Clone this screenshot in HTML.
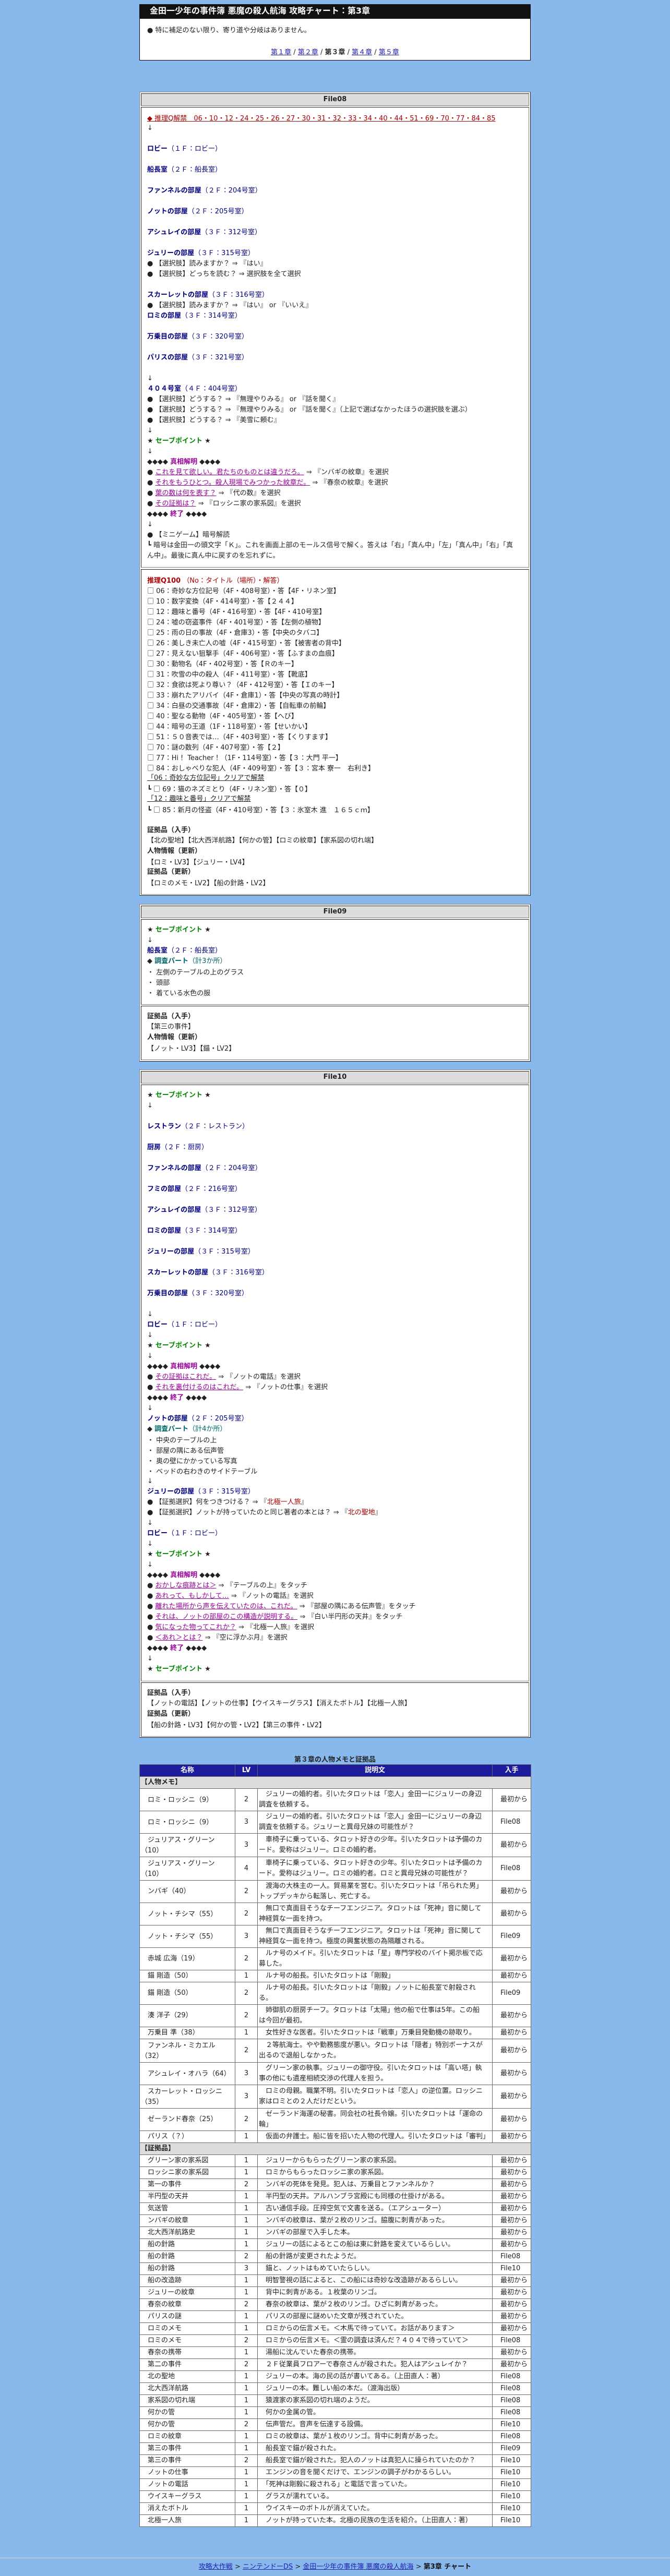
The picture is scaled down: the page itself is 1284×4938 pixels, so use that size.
<!DOCTYPE html>
<html lang="ja"><head><meta charset="utf-8"><title>金田一少年の事件簿 悪魔の殺人航海 攻略チャート：第3章</title>
<style>
html,body{margin:0;padding:0}
body{position:relative;width:1284px;height:4938px;overflow:hidden;background:#88b8ec;font-family:"DejaVu Sans","Noto Sans CJK JP",sans-serif;font-size:13px;line-height:20px;color:#222}
i{font-style:normal;font-family:"Noto Sans CJK JP",sans-serif}
a{color:#2222aa}
.a{position:absolute;box-sizing:border-box}
.o{left:267px;width:750px;background:#fff;border:1px solid;border-color:#808080 #222 #222 #808080;background:#fff}
.h,.b{left:270px;width:744px;border:1px solid;border-color:#222 #808080 #808080 #222;background:#fff}
.h{background:#ddd;text-align:center;font-weight:bold;padding-top:1px;height:24px}
.b{padding:10px 11px 0}
.b div{height:20px;white-space:nowrap}
.r{color:#000080}.r b{color:#000080}
.s{color:#008800;font-weight:bold}
.p{color:#990099;font-weight:bold}
.l{color:#990099;text-decoration:underline}
.e{color:#006666}
.q{color:#aa0000}
table{position:absolute;left:267px;top:3382px;width:750px;table-layout:fixed;border-collapse:collapse;background:#fff}
td,th{border:1px solid #666;padding:1px 2px;white-space:nowrap;overflow:hidden;font-weight:normal;line-height:20px}
th{background:#1c1c9c;color:#fff;font-weight:bold;text-align:center}
td.c{text-align:center}
td.g{background:#ddd;font-weight:bold}
</style></head><body>

<div class="a" style="left:267px;top:8px;width:750px;height:108px;background:#fff;border:1px solid #000"></div>
<div class="a tt" style="left:267px;top:8px;width:750px;height:28px;background:#111;color:#fff;font-weight:bold;font-size:16px;line-height:25px;padding-left:20px;white-space:nowrap">金田一少年の事件簿 悪魔の殺人航海 攻略チャート：第3章</div>
<div class="a" style="left:282px;top:49px">● 特に補足のない限り、寄り道や分岐はありません。</div>
<div class="a" style="left:267px;top:91px;width:750px;text-align:center"><a href="#">第１章</a> / <a href="#">第２章</a> / <b>第３章</b> / <a href="#">第４章</a> / <a href="#">第５章</a></div>

<div class="a o" style="top:176px;height:1541px"></div>
<div class="a h" style="top:179px">File08</div>
<div class="a b" style="top:205px;height:883px">
<div style="color:#aa0000;text-decoration:underline">◆ 推理Q解禁　06<i>・</i>10<i>・</i>12<i>・</i>24<i>・</i>25<i>・</i>26<i>・</i>27<i>・</i>30<i>・</i>31<i>・</i>32<i>・</i>33<i>・</i>34<i>・</i>40<i>・</i>44<i>・</i>51<i>・</i>69<i>・</i>70<i>・</i>77<i>・</i>84<i>・</i>85</div>
<div>↓</div>
<div></div>
<div class="r"><b>ロビー</b>（１Ｆ：ロビー）</div>
<div></div>
<div class="r"><b>船長室</b>（２Ｆ：船長室）</div>
<div></div>
<div class="r"><b>ファンネルの部屋</b>（２Ｆ：204号室）</div>
<div></div>
<div class="r"><b>ノットの部屋</b>（２Ｆ：205号室）</div>
<div></div>
<div class="r"><b>アシュレイの部屋</b>（３Ｆ：312号室）</div>
<div></div>
<div class="r"><b>ジュリーの部屋</b>（３Ｆ：315号室）</div>
<div>● 【選択肢】読みますか？ ⇒ 『はい』</div>
<div>● 【選択肢】どっちを読む？ ⇒ 選択肢を全て選択</div>
<div></div>
<div class="r"><b>スカーレットの部屋</b>（３Ｆ：316号室）</div>
<div>● 【選択肢】読みますか？ ⇒ 『はい』 or 『いいえ』</div>
<div class="r"><b>ロミの部屋</b>（３Ｆ：314号室）</div>
<div></div>
<div class="r"><b>万乗目の部屋</b>（３Ｆ：320号室）</div>
<div></div>
<div class="r"><b>パリスの部屋</b>（３Ｆ：321号室）</div>
<div></div>
<div>↓</div>
<div class="r"><b>４０４号室</b>（４Ｆ：404号室）</div>
<div>● 【選択肢】どうする？ ⇒ 『無理やりみる』 or 『話を聞く』</div>
<div>● 【選択肢】どうする？ ⇒ 『無理やりみる』 or 『話を聞く』（上記で選ばなかったほうの選択肢を選ぶ）</div>
<div>● 【選択肢】どうする？ ⇒ 『美雪に頼む』</div>
<div>↓</div>
<div>★ <span class="s">セーブポイント</span> ★</div>
<div>↓</div>
<div>◆◆◆◆ <span class="p">真相解明</span> ◆◆◆◆</div>
<div>● <span class="l">これを見て欲しい。君たちのものとは違うだろ。</span> ⇒ 『ンバギの紋章』を選択</div>
<div>● <span class="l">それをもうひとつ。殺人現場でみつかった紋章だ。</span> ⇒ 『春奈の紋章』を選択</div>
<div>● <span class="l">葉の数は何を表す？</span> ⇒ 『代の数』を選択</div>
<div>● <span class="l">その証拠は？</span> ⇒ 『ロッシニ家の家系図』を選択</div>
<div>◆◆◆◆ <span class="p">終了</span> ◆◆◆◆</div>
<div>↓</div>
<div>● 【ミニゲーム】暗号解読</div>
<div>┗ 暗号は金田一の頭文字「Ｋ」。これを画面上部のモールス信号で解く。答えは「右」「真ん中」「左」「真ん中」「右」「真</div>
<div>ん中」。最後に真ん中に戻すのを忘れずに。</div>
</div>
<div class="a b" style="top:1091px;height:624px">
<div class="q"><b>推理Q100</b> （No：タイトル（場所）<i>・</i>解答）</div>
<div><i>□</i> 06：奇妙な方位記号（4F<i>・</i>408号室）<i>・</i>答【4F<i>・</i>リネン室】</div>
<div><i>□</i> 10：数字変換（4F<i>・</i>414号室）<i>・</i>答【２４４】</div>
<div><i>□</i> 12：趣味と番号（4F<i>・</i>416号室）<i>・</i>答【4F<i>・</i>410号室】</div>
<div><i>□</i> 24：嘘の窃盗事件（4F<i>・</i>401号室）<i>・</i>答【左側の植物】</div>
<div><i>□</i> 25：雨の日の事故（4F<i>・</i>倉庫3）<i>・</i>答【中央のタバコ】</div>
<div><i>□</i> 26：美しき未亡人の嘘（4F<i>・</i>415号室）<i>・</i>答【被害者の背中】</div>
<div><i>□</i> 27：見えない狙撃手（4F<i>・</i>406号室）<i>・</i>答【ふすまの血痕】</div>
<div><i>□</i> 30：動物名（4F<i>・</i>402号室）<i>・</i>答【Ｒのキー】</div>
<div><i>□</i> 31：吹雪の中の殺人（4F<i>・</i>411号室）<i>・</i>答【靴底】</div>
<div><i>□</i> 32：食欲は死より尊い？（4F<i>・</i>412号室）<i>・</i>答【Ｉのキー】</div>
<div><i>□</i> 33：崩れたアリバイ（4F<i>・</i>倉庫1）<i>・</i>答【中央の写真の時計】</div>
<div><i>□</i> 34：白昼の交通事故（4F<i>・</i>倉庫2）<i>・</i>答【自転車の前輪】</div>
<div><i>□</i> 40：聖なる動物（4F<i>・</i>405号室）<i>・</i>答【へび】</div>
<div><i>□</i> 44：暗号の王道（1F<i>・</i>118号室）<i>・</i>答【せいかい】</div>
<div><i>□</i> 51：５０音表では…（4F<i>・</i>403号室）<i>・</i>答【くりすます】</div>
<div><i>□</i> 70：謎の数列（4F<i>・</i>407号室）<i>・</i>答【２】</div>
<div><i>□</i> 77：Hi！ Teacher！（1F<i>・</i>114号室）<i>・</i>答【３：大門 平一】</div>
<div><i>□</i> 84：おしゃべりな犯人（4F<i>・</i>409号室）<i>・</i>答【３：宮本 寮一　右利き】</div>
<div><u>「06：奇妙な方位記号」クリアで解禁</u></div>
<div>┗ <i>□</i> 69：猫のネズミとり（4F<i>・</i>リネン室）<i>・</i>答【０】</div>
<div><u>「12：趣味と番号」クリアで解禁</u></div>
<div>┗ <i>□</i> 85：新月の怪盗（4F<i>・</i>410号室）<i>・</i>答【３：氷室木 進　１６５ｃｍ】</div>
<div></div>
<div><b>証拠品（入手）</b></div>
<div>【北の聖地】【北大西洋航路】【何かの管】【ロミの紋章】【家系図の切れ端】</div>
<div><b>人物情報（更新）</b></div>
<div>【ロミ<i>・</i>LV3】【ジュリー<i>・</i>LV4】</div>
<div><b>証拠品（更新）</b></div>
<div>【ロミのメモ<i>・</i>LV2】【船の針路<i>・</i>LV2】</div>
</div>

<div class="a o" style="top:1733px;height:302px"></div>
<div class="a h" style="top:1736px">File09</div>
<div class="a b" style="top:1762px;height:164px">
<div>★ <span class="s">セーブポイント</span> ★</div>
<div>↓</div>
<div class="r"><b>船長室</b>（２Ｆ：船長室）</div>
<div>◆ <span class="e"><b>調査パート</b>（計3か所）</span></div>
<div><i>・</i> 左側のテーブルの上のグラス</div>
<div><i>・</i> 頭部</div>
<div><i>・</i> 着ている水色の服</div>
</div>
<div class="a b" style="top:1928px;height:104px">
<div><b>証拠品（入手）</b></div>
<div>【第三の事件】</div>
<div><b>人物情報（更新）</b></div>
<div>【ノット<i>・</i>LV3】【錨<i>・</i>LV2】</div>
</div>

<div class="a o" style="top:2050px;height:1281px"></div>
<div class="a h" style="top:2053px">File10</div>
<div class="a b" style="top:2079px;height:1144px">
<div>★ <span class="s">セーブポイント</span> ★</div>
<div>↓</div>
<div></div>
<div class="r"><b>レストラン</b>（２Ｆ：レストラン）</div>
<div></div>
<div class="r"><b>厨房</b>（２Ｆ：厨房）</div>
<div></div>
<div class="r"><b>ファンネルの部屋</b>（２Ｆ：204号室）</div>
<div></div>
<div class="r"><b>フミの部屋</b>（２Ｆ：216号室）</div>
<div></div>
<div class="r"><b>アシュレイの部屋</b>（３Ｆ：312号室）</div>
<div></div>
<div class="r"><b>ロミの部屋</b>（３Ｆ：314号室）</div>
<div></div>
<div class="r"><b>ジュリーの部屋</b>（３Ｆ：315号室）</div>
<div></div>
<div class="r"><b>スカーレットの部屋</b>（３Ｆ：316号室）</div>
<div></div>
<div class="r"><b>万乗目の部屋</b>（３Ｆ：320号室）</div>
<div></div>
<div>↓</div>
<div class="r"><b>ロビー</b>（１Ｆ：ロビー）</div>
<div>↓</div>
<div>★ <span class="s">セーブポイント</span> ★</div>
<div>↓</div>
<div>◆◆◆◆ <span class="p">真相解明</span> ◆◆◆◆</div>
<div>● <span class="l">その証拠はこれだ。</span> ⇒ 『ノットの電話』を選択</div>
<div>● <span class="l">それを裏付けるのはこれだ。</span> ⇒ 『ノットの仕事』を選択</div>
<div>◆◆◆◆ <span class="p">終了</span> ◆◆◆◆</div>
<div>↓</div>
<div class="r"><b>ノットの部屋</b>（２Ｆ：205号室）</div>
<div>◆ <span class="e"><b>調査パート</b>（計4か所）</span></div>
<div><i>・</i> 中央のテーブルの上</div>
<div><i>・</i> 部屋の隅にある伝声管</div>
<div><i>・</i> 奥の壁にかかっている写真</div>
<div><i>・</i> ベッドの右わきのサイドテーブル</div>
<div>↓</div>
<div class="r"><b>ジュリーの部屋</b>（３Ｆ：315号室）</div>
<div>● 【証拠選択】何をつきつける？ ⇒ 『<span class="q">北極一人旅</span>』</div>
<div>● 【証拠選択】ノットが持っていたのと同じ著者の本とは？ ⇒ 『<span class="q">北の聖地</span>』</div>
<div>↓</div>
<div class="r"><b>ロビー</b>（１Ｆ：ロビー）</div>
<div>↓</div>
<div>★ <span class="s">セーブポイント</span> ★</div>
<div>↓</div>
<div>◆◆◆◆ <span class="p">真相解明</span> ◆◆◆◆</div>
<div>● <span class="l">おかしな痕跡とは＞</span> ⇒ 『テーブルの上』をタッチ</div>
<div>● <span class="l">あれって、もしかして…</span> ⇒ 『ノットの電話』を選択</div>
<div>● <span class="l">離れた場所から声を伝えていたのは、これだ。</span> ⇒ 『部屋の隅にある伝声管』をタッチ</div>
<div>● <span class="l">それは、ノットの部屋のこの構造が説明する。</span> ⇒ 『白い半円形の天井』をタッチ</div>
<div>● <span class="l">気になった物ってこれか？</span> ⇒ 『北極一人旅』を選択</div>
<div>● <span class="l">＜あれ＞とは？</span> ⇒ 『空に浮かぶ月』を選択</div>
<div>◆◆◆◆ <span class="p">終了</span> ◆◆◆◆</div>
<div>↓</div>
<div>★ <span class="s">セーブポイント</span> ★</div>
</div>
<div class="a b" style="top:3225px;height:104px">
<div><b>証拠品（入手）</b></div>
<div>【ノットの電話】【ノットの仕事】【ウイスキーグラス】【消えたボトル】【北極一人旅】</div>
<div><b>証拠品（更新）</b></div>
<div>【船の針路<i>・</i>LV3】【何かの管<i>・</i>LV2】【第三の事件<i>・</i>LV2】</div>
</div>

<div class="a tt" style="left:267px;top:3364px;width:750px;text-align:center;font-weight:bold">第３章の人物メモと証拠品</div>

<table>
<colgroup><col style="width:183px"><col style="width:43px"><col style="width:450px"><col style="width:74px"></colgroup>
<tr><th>名称</th><th>LV</th><th>説明文</th><th>入手</th></tr>
<tr><td class="g" colspan="4">【人物メモ】</td></tr>
<tr><td>　ロミ<i>・</i>ロッシニ（9）</td><td class="c">2</td><td>　ジュリーの婚約者。引いたタロットは「恋人」金田一にジュリーの身辺<br>調査を依頼する。</td><td>　最初から</td></tr>
<tr><td>　ロミ<i>・</i>ロッシニ（9）</td><td class="c">3</td><td>　ジュリーの婚約者。引いたタロットは「恋人」金田一にジュリーの身辺<br>調査を依頼する。ジュリーと異母兄妹の可能性が？</td><td>　File08</td></tr>
<tr><td>　ジュリアス<i>・</i>グリーン<br>（10）</td><td class="c">3</td><td>　車椅子に乗っている、タロット好きの少年。引いたタロットは予備のカ<br>ード。愛称はジュリー。ロミの婚約者。</td><td>　最初から</td></tr>
<tr><td>　ジュリアス<i>・</i>グリーン<br>（10）</td><td class="c">4</td><td>　車椅子に乗っている、タロット好きの少年。引いたタロットは予備のカ<br>ード。愛称はジュリー。ロミの婚約者。ロミと異母兄妹の可能性が？</td><td>　File08</td></tr>
<tr><td>　ンバギ（40）</td><td class="c">2</td><td>　渡海の大株主の一人。貿易業を営む。引いたタロットは「吊られた男」<br>トップデッキから転落し、死亡する。</td><td>　最初から</td></tr>
<tr><td>　ノット<i>・</i>チシマ（55）</td><td class="c">2</td><td>　無口で真面目そうなチーフエンジニア。タロットは「死神」音に関して<br>神経質な一面を持つ。</td><td>　最初から</td></tr>
<tr><td>　ノット<i>・</i>チシマ（55）</td><td class="c">3</td><td>　無口で真面目そうなチーフエンジニア。タロットは「死神」音に関して<br>神経質な一面を持つ。極度の興奮状態の為隔離される。</td><td>　File09</td></tr>
<tr><td>　赤城 広海（19）</td><td class="c">2</td><td>　ルナ号のメイド。引いたタロットは「星」専門学校のバイト掲示板で応<br>募した。</td><td>　最初から</td></tr>
<tr><td>　錨 剛造（50）</td><td class="c">1</td><td>　ルナ号の船長。引いたタロットは「剛毅」</td><td>　最初から</td></tr>
<tr><td>　錨 剛造（50）</td><td class="c">2</td><td>　ルナ号の船長。引いたタロットは「剛毅」ノットに船長室で射殺され<br>る。</td><td>　File09</td></tr>
<tr><td>　湊 洋子（29）</td><td class="c">2</td><td>　姉御肌の厨房チーフ。タロットは「太陽」他の船で仕事は5年。この船<br>は今回が最初。</td><td>　最初から</td></tr>
<tr><td>　万乗目 準（38）</td><td class="c">1</td><td>　女性好きな医者。引いたタロットは「戦車」万乗目発動機の跡取り。</td><td>　最初から</td></tr>
<tr><td>　ファンネル<i>・</i>ミカエル<br>（32）</td><td class="c">2</td><td>　２等航海士。やや勤務態度が悪い。タロットは「隠者」特別ボーナスが<br>出るので退船しなかった。</td><td>　最初から</td></tr>
<tr><td>　アシュレイ<i>・</i>オハラ（64）</td><td class="c">3</td><td>　グリーン家の執事。ジュリーの御守役。引いたタロットは「高い塔」執<br>事の他にも遺産相続交渉の代理人を担う。</td><td>　最初から</td></tr>
<tr><td>　スカーレット<i>・</i>ロッシニ<br>（35）</td><td class="c">3</td><td>　ロミの母親。職業不明。引いたタロットは「恋人」の逆位置。ロッシニ<br>家はロミとの２人だけだという。</td><td>　最初から</td></tr>
<tr><td>　ゼーランド春奈（25）</td><td class="c">2</td><td>　ゼーランド海運の秘書。同会社の社長令嬢。引いたタロットは「運命の<br>輪」</td><td>　最初から</td></tr>
<tr><td>　パリス（？）</td><td class="c">1</td><td>　仮面の弁護士。船に皆を招いた人物の代理人。引いたタロットは「審判」</td><td>　最初から</td></tr>
<tr><td class="g" colspan="4">【証拠品】</td></tr>
<tr><td>　グリーン家の家系図</td><td class="c">1</td><td>　ジュリーからもらったグリーン家の家系図。</td><td>　最初から</td></tr>
<tr><td>　ロッシニ家の家系図</td><td class="c">1</td><td>　ロミからもらったロッシニ家の家系図。</td><td>　最初から</td></tr>
<tr><td>　第一の事件</td><td class="c">2</td><td>　ンバギの死体を発見。犯人は、万乗目とファンネルか？</td><td>　最初から</td></tr>
<tr><td>　半円型の天井</td><td class="c">1</td><td>　半円型の天井。アルハンブラ宮殿にも同様の仕掛けがある。</td><td>　最初から</td></tr>
<tr><td>　気送管</td><td class="c">1</td><td>　古い通信手段。圧搾空気で文書を送る。（エアシューター）</td><td>　最初から</td></tr>
<tr><td>　ンバギの紋章</td><td class="c">1</td><td>　ンバギの紋章は、葉が２枚のリンゴ。脇腹に刺青があった。</td><td>　最初から</td></tr>
<tr><td>　北大西洋航路史</td><td class="c">1</td><td>　ンバギの部屋で入手した本。</td><td>　最初から</td></tr>
<tr><td>　船の針路</td><td class="c">1</td><td>　ジュリーの話によるとこの船は東に針路を変えているらしい。</td><td>　最初から</td></tr>
<tr><td>　船の針路</td><td class="c">2</td><td>　船の針路が変更されたようだ。</td><td>　File08</td></tr>
<tr><td>　船の針路</td><td class="c">3</td><td>　錨と、ノットはもめていたらしい。</td><td>　File10</td></tr>
<tr><td>　船の改造跡</td><td class="c">1</td><td>　明智警視の話によると、この船には奇妙な改造跡があるらしい。</td><td>　最初から</td></tr>
<tr><td>　ジュリーの紋章</td><td class="c">1</td><td>　背中に刺青がある。１枚葉のリンゴ。</td><td>　最初から</td></tr>
<tr><td>　春奈の紋章</td><td class="c">2</td><td>　春奈の紋章は、葉が２枚のリンゴ。ひざに刺青があった。</td><td>　最初から</td></tr>
<tr><td>　パリスの謎</td><td class="c">1</td><td>　パリスの部屋に謎めいた文章が残されていた。</td><td>　最初から</td></tr>
<tr><td>　ロミのメモ</td><td class="c">1</td><td>　ロミからの伝言メモ。＜木馬で待っていて。お話があります＞</td><td>　最初から</td></tr>
<tr><td>　ロミのメモ</td><td class="c">2</td><td>　ロミからの伝言メモ。＜霊の調査は済んだ？４０４で待っていて＞</td><td>　File08</td></tr>
<tr><td>　春奈の携帯</td><td class="c">1</td><td>　湯船に沈んでいた春奈の携帯。</td><td>　最初から</td></tr>
<tr><td>　第二の事件</td><td class="c">2</td><td>　２Ｆ従業員フロアーで春奈さんが殺された。犯人はアシュレイか？</td><td>　最初から</td></tr>
<tr><td>　北の聖地</td><td class="c">1</td><td>　ジュリーの本。海の民の話が書いてある。（上田直人：著）</td><td>　File08</td></tr>
<tr><td>　北大西洋航路</td><td class="c">1</td><td>　ジュリーの本。難しい船の本だ。（渡海出版）</td><td>　File08</td></tr>
<tr><td>　家系図の切れ端</td><td class="c">1</td><td>　猿渡家の家系図の切れ端のようだ。</td><td>　File08</td></tr>
<tr><td>　何かの管</td><td class="c">1</td><td>　何かの金属の管。</td><td>　File08</td></tr>
<tr><td>　何かの管</td><td class="c">2</td><td>　伝声管だ。音声を伝達する設備。</td><td>　File10</td></tr>
<tr><td>　ロミの紋章</td><td class="c">1</td><td>　ロミの紋章は、葉が１枚のリンゴ。背中に刺青があった。</td><td>　File08</td></tr>
<tr><td>　第三の事件</td><td class="c">1</td><td>　船長室で錨が殺された。</td><td>　File09</td></tr>
<tr><td>　第三の事件</td><td class="c">2</td><td>　船長室で錨が殺された。犯人のノットは真犯人に操られていたのか？</td><td>　File10</td></tr>
<tr><td>　ノットの仕事</td><td class="c">1</td><td>　エンジンの音を聞くだけで、エンジンの調子がわかるらしい。</td><td>　File10</td></tr>
<tr><td>　ノットの電話</td><td class="c">1</td><td>　「死神は剛毅に殺される」と電話で言っていた。</td><td>　File10</td></tr>
<tr><td>　ウイスキーグラス</td><td class="c">1</td><td>　グラスが濡れている。</td><td>　File10</td></tr>
<tr><td>　消えたボトル</td><td class="c">1</td><td>　ウイスキーのボトルが消えていた。</td><td>　File10</td></tr>
<tr><td>　北極一人旅</td><td class="c">1</td><td>　ノットが持っていた本。北極の民族の生活を紹介。（上田直人：著）</td><td>　File10</td></tr>
</table>

<div class="a" style="left:0;top:4902px;width:1284px;height:2px;background:#ccd6e4;border-top:1px solid #a8b8cc;box-sizing:border-box"></div>
<div class="a" style="left:0;top:4911px;width:1284px;text-align:center"><a href="#">攻略大作戦</a> &gt; <a href="#">ニンテンドーDS</a> &gt; <a href="#">金田一少年の事件簿 悪魔の殺人航海</a> &gt; <b style="color:#111">第3章 チャート</b></div>
</body></html>
